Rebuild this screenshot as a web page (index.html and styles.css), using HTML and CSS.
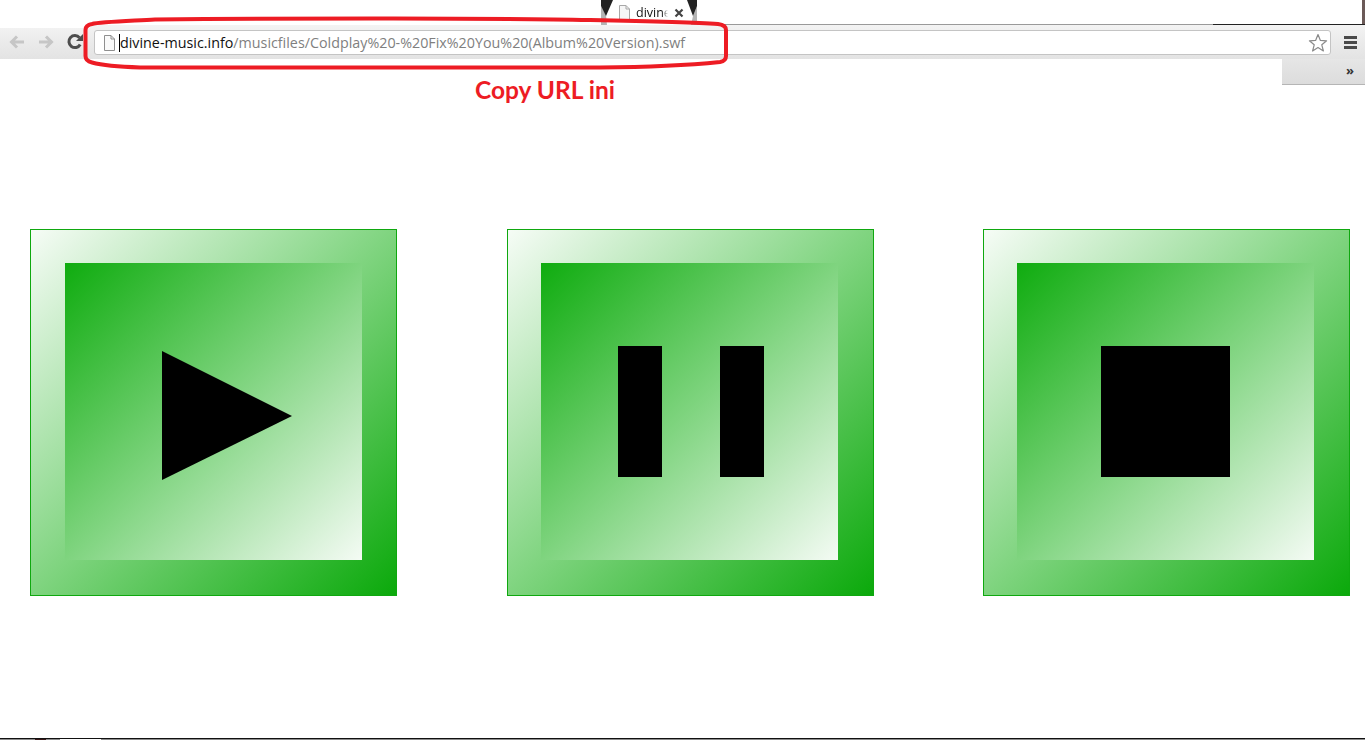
FILE: index.html
```html
<!DOCTYPE html>
<html lang="id">
<head>
<meta charset="utf-8">
<title>divine-music.info</title>
<link rel="stylesheet" href="styles.css">
</head>
<body>
<div class="page">
  <header class="browser">
    <div class="tabstrip">
      <div class="tab">
        <svg class="tab-bg" width="96" height="25" viewBox="0 0 96 25">
          <rect width="96" height="25" fill="#fff"/>
          <path d="M0 6L5 15L6 25H0Z" fill="#b4b4b4"/>
          <path d="M0 0H12L5 16L0 6Z" fill="#222"/>
          <path d="M96 6V25H90L92 16Z" fill="#b4b4b4"/>
          <path d="M86 0H96V6L92 16Z" fill="#222"/>
        </svg>
        <svg class="tab-file" width="13" height="15" viewBox="0 0 13 15">
          <path d="M1.500 .5H8L11.500 4V14.500H1.500Z" fill="#f6f6f6" stroke="#a8a8a8"/>
          <path d="M8 .5V4H11.500" fill="none" stroke="#a8a8a8"/>
        </svg>
        <span class="tab-title">divine</span>
        <svg class="tab-close" width="10" height="10" viewBox="0 0 10 10"><path d="M1.500 1.500L8.500 8.500M8.500 1.500L1.500 8.500" stroke="#444" stroke-width="2.200"/></svg>
      </div>
      <div class="strip-edge"></div>
    </div>
    <div class="toolbar">
      <svg class="nav-icon" width="18" height="16" viewBox="0 0 18 16"><path d="M16 8H4M9 2.500L3.500 8L9 13.500" fill="none" stroke="#c6c6c6" stroke-width="3"/></svg>
      <svg class="nav-icon next" width="18" height="16" viewBox="0 0 18 16"><path d="M2 8H14M9 2.500L14.500 8L9 13.500" fill="none" stroke="#c6c6c6" stroke-width="3"/></svg>
      <svg class="nav-icon reload" width="18" height="18" viewBox="0 0 18 18"><path d="M14.200 11.500A6 6 0 1 1 13.500 4.700" fill="none" stroke="#4d4d4d" stroke-width="3"/><path d="M10 8H17V1Z" fill="#4d4d4d"/></svg>
      <div class="omnibox">
        <svg class="omni-file" width="13" height="16" viewBox="0 0 13 16">
          <path d="M1.500 .5H8L11.500 4V15.500H1.500Z" fill="#fafafa" stroke="#8f8f8f"/>
          <path d="M8 .5V4H11.500" fill="none" stroke="#8f8f8f"/>
        </svg>
        <span class="caret"></span>
        <span class="url"><span class="url-host">divine-music.info</span>/musicfiles/Coldplay%20-%20Fix%20You%20(Album%20Version).swf</span>
        <svg class="star" width="20" height="20" viewBox="0 0 20 20"><path d="M10 1.500L12.400 7.400L18.600 7.800L13.800 11.800L15.400 18L10 14.600L4.600 18L6.200 11.800L1.400 7.800L7.600 7.400Z" fill="#fff" stroke="#8a8a8a" stroke-width="1.200" stroke-linejoin="round"/></svg>
      </div>
      <div class="menu"><i></i><i></i><i></i></div>
    </div>
    <div class="overflow-panel"><span class="chevrons">»</span></div>
  </header>

  <p class="annotation">Copy URL ini</p>

  <main class="players">
    <button class="player first" aria-label="Play">
      <span class="player-face">
        <svg class="play-icon" width="130" height="129" viewBox="0 0 130 129"><path d="M0 0L130 65L0 129Z"/></svg>
      </span>
    </button>
    <button class="player" aria-label="Pause">
      <span class="player-face pause-face"><i class="bar"></i><i class="bar"></i></span>
    </button>
    <button class="player stop" aria-label="Stop">
      <span class="player-face"><i class="stop-icon"></i></span>
    </button>
  </main>

  <footer class="bottom-edge"></footer>

  <svg class="scribble" width="1365" height="80" viewBox="0 0 1365 80">
    <path d="M155 19.500C130 21 100 22 92 24Q85.500 25 85.500 30V56Q85.500 61 92 62.500C105 66 125 67 140 67.500H600C650 67 700 64 720 62Q726 61 726 56V30Q726 25 718 24C690 22 640 21 590 20C500 18 300 18 155 19.500Z" fill="none" stroke="#ed1c24" stroke-width="4"/>
  </svg>
</div>
</body>
</html>
```

FILE: styles.css
```css
* { box-sizing: border-box; }
html, body { margin: 0; height: 100%; background: #fff; overflow: hidden; }
.page { position: relative; display: flex; flex-direction: column; height: 740px; font-family: "Open Sans", "Liberation Sans", sans-serif; }

.browser { position: relative; height: 59px; flex: none; }
.tabstrip { position: relative; height: 25px; }
.tab { position: absolute; left: 601px; top: 0; width: 96px; height: 25px; z-index: 2; }
.tab-bg { position: absolute; left: 0; top: 0; }
.tab-file { position: absolute; left: 17px; top: 5px; }
.tab-title { position: absolute; left: 35px; top: 5px; font-size: 12.500px; line-height: 16px; color: #111; -webkit-mask-image: linear-gradient(90deg, #000 26px, transparent 32px); mask-image: linear-gradient(90deg, #000 26px, transparent 32px); }
.tab-close { position: absolute; left: 73px; top: 8px; }
.strip-edge { position: absolute; left: 0; right: 0; top: 24px; height: 1px; background: linear-gradient(90deg, #fff 0, #fff 601px, #9a9a9a 601px, #9a9a9a 1213px, #222 1213px); }
.strip-edge::after { content: ""; position: absolute; right: 0; top: -24px; width: 3px; height: 24px; background: #6b5a58; }

.toolbar { display: flex; align-items: center; height: 34px; padding: 0 0 0 8px; background: linear-gradient(90deg, #fff 0, #fff 90px, transparent 90px) top / 100% 3px no-repeat, linear-gradient(#f3f3f3, #e3e3e3); }
.nav-icon { flex: none; }
.nav-icon.next { margin-left: 11px; }
.nav-icon.reload { margin-left: 11px; }
.omnibox { position: relative; display: flex; align-items: center; align-self: flex-start; width: 1237px; height: 25px; margin: 5px 0 0 10px; padding-left: 8px; background: #fff; border: 1px solid #c4c4c4; border-radius: 3px; }
.omni-file { flex: none; }
.caret { flex: none; width: 1px; height: 18px; margin-left: 3px; background: #000; }
.url { font-size: 14.300px; line-height: 20px; color: #7f7f7f; white-space: nowrap; }
.url-host { color: #111; }
.star { position: absolute; right: 2px; top: 2px; }
.menu { display: flex; flex-direction: column; gap: 2px; width: 13px; margin: 0 0 0 13px; }
.menu i { display: block; height: 3px; background: #4a4a4a; }

.overflow-panel { position: absolute; right: 0; top: 59px; width: 83px; height: 26px; background: linear-gradient(#e6e6e6, #dcdcdc); border-bottom: 1px solid #b5b5b5; }
.chevrons { position: absolute; left: 64px; top: 2px; font-size: 13px; font-weight: 700; line-height: 18px; color: #333; }

.annotation { margin: 15px 0 0 475px; font-family: Lato, "Open Sans", sans-serif; font-size: 24.500px; font-weight: 700; line-height: 32px; color: #ed1c24; }

.players { display: flex; gap: 110px; margin-top: 123px; padding-left: 30px; }
.player { display: flex; align-items: flex-start; flex: none; width: 367px; height: 367px; padding: 33px 0 0 33px; border: 1px solid #0fa80f; border-radius: 0; background: linear-gradient(135deg, #f6fcf6 0%, #7fd47f 50%, #0ba90b 100%); cursor: pointer; }
.player.first { padding-left: 34px; }
.player.stop { margin-left: -1px; }
.player-face { display: flex; align-items: center; justify-content: center; width: 297px; height: 297px; background: linear-gradient(135deg, #0fac0f 0%, #7fd47f 50%, #f4fbf4 100%); }
.play-icon { display: block; margin: 8px 0 0 27px; }
.pause-face { gap: 58px; padding-left: 3px; }
.bar { display: block; width: 44px; height: 131px; background: #000; }
.stop-icon { display: block; width: 129px; height: 131px; background: #000; }

.bottom-edge { flex: none; margin-top: auto; height: 2px; border-top: 1px solid #111; background: linear-gradient(90deg, #8d8d8d 0, #8d8d8d 35px, #3a1a1a 35px, #3a1a1a 46px, #8d8d8d 46px, #8d8d8d 60px, #fff 60px, #fff 101px, #8d8d8d 101px); }

.scribble { position: absolute; left: 0; top: 0; z-index: 3; pointer-events: none; }
```
